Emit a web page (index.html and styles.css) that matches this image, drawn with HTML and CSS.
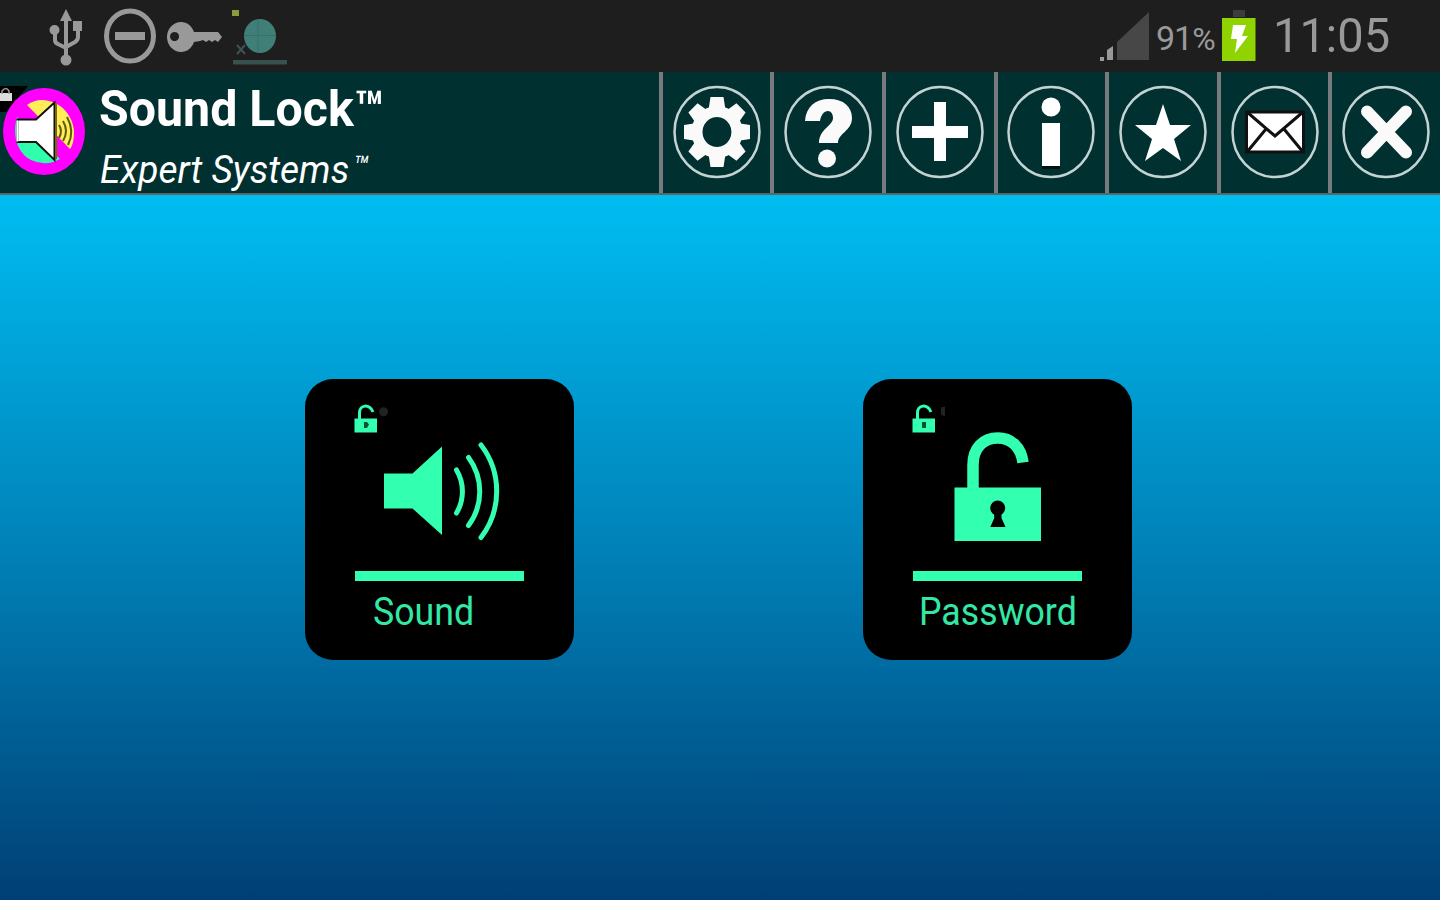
FILE: index.html
```html
<!DOCTYPE html>
<html lang="en">
<head>
  <meta charset="utf-8">
  <title>Sound Lock</title>
  <link rel="stylesheet" href="styles.css">
</head>
<body>
  <div class="status-bar">
    <svg class="status-icons" width="300" height="72" viewBox="0 0 300 72">
      <g fill="none" stroke="#999" stroke-width="4">
        <path d="M66 16V60M55 30v10q0 3 3 4l8 4M78 26v11q0 3-3 5l-9 5"/>
      </g>
      <g fill="#999">
        <path d="M66 9l6 12H60zM73 21h9v10h-9z"/>
        <circle cx="54.5" cy="30" r="5"/>
        <circle cx="66" cy="60" r="5.5"/>
      </g>
      <ellipse cx="130" cy="36" rx="23.5" ry="25" fill="none" stroke="#999" stroke-width="5"/>
      <path d="M115 32h30v8h-30z" fill="#999"/>
      <path d="M181 22c6 0 11 4 13 10h24l4 5-4 5-3-2-3 2-3-2-3 2-3-2-3 1-6 1c-2 6-7 10-13 10-8 0-14-7-14-15s6-15 14-15zM174.500 32a4.500 4.500 0 1 0 .1 0z" fill="#999" fill-rule="evenodd"/>
      <path d="M232 10h7v6h-7z" fill="#8f9a3a"/>
      <ellipse cx="260" cy="36" rx="16" ry="17" fill="#3f7f78"/>
      <path d="M244 35.500h32M258 20v33" stroke="#37706a" stroke-width="1" fill="none"/>
      <path d="M237 45l8 9M245 45l-8 9" stroke="#3d5552" stroke-width="2"/>
      <path d="M233 60h54v4.500h-54z" fill="#38504e"/>
    </svg>
    <div class="status-right">
      <svg width="50" height="72" viewBox="1099 0 50 72">
        <path d="M1149 12v48h-32V42z" fill="#474747"/>
        <path d="M1107 50l6-4v14h-6zM1100 57h4v4h-4z" fill="#999"/>
      </svg>
      <span class="battery-level">91<small>%</small></span>
      <svg class="battery" width="34" height="72" viewBox="1222 0 34 72">
        <path d="M1233 10h12v7h-12z" fill="#3c3c3c"/>
        <path d="M1222 18h33.500v43H1222z" fill="#8fd400"/>
        <path d="M1233 25h13l-4 11h6l-13 17 2-14h-6z" fill="#fff"/>
      </svg>
      <span class="clock">11:05</span>
    </div>
  </div>

  <header class="header">
    <svg class="logo" width="90" height="121" viewBox="0 72 90 121">
      <path d="M0 86h28L6 112H0z" fill="#000"/>
      <path d="M0 93h12v8H0z" fill="#ddd"/>
      <path d="M2 94v-3q4-5 7 0v3" fill="none" stroke="#999" stroke-width="1.500"/>
      <ellipse cx="44" cy="131.500" rx="41" ry="43.500" fill="#f0f"/>
      <path d="M27 105q10-7 22-4c14 3 24 16 25 30 0 8-1 14-4 18z" fill="#ffee58"/>
      <path d="M17 117l43 42q-14 8-29 1c-14-7-19-25-14-43z" fill="#2fffac"/>
      <path d="M17.500 119.500H36l18.500-17V160L36 142H17.500z" fill="#fff" stroke="#111" stroke-width="2"/>
      <path d="M17.500 120.500v21" stroke="#fff" stroke-width="2"/>
      <path d="M56 103v56" stroke="#776a00" stroke-width="2"/>
      <path d="M59 125q4 6 0 13M63 121q6 10 0 20M67 117q8 14 1 28" fill="none" stroke="#5f5912" stroke-width="2"/>
    </svg>
    <div class="titles">
      <h1><span>Sound Lock™</span></h1>
      <p><span>Expert Systems<small>™</small></span></p>
    </div>
    <nav class="tools">
      <a class="tool"><svg width="90" height="96" viewBox="-45 -48 90 96">
        <ellipse rx="42.500" ry="45"/>
        <g fill="#fafafa">
          <path d="M-6.500-35H6.500L8.500-22h-17zM-6.500 35H6.500L8.500 22h-17zM-33-7v14l13 2V-9zM33-7v14L20 9V-9z"/>
          <path transform="rotate(45)" d="M-6.500-34H6.500L8.500-22h-17zM-6.500 34H6.500L8.500 22h-17zM-34-6.500v13l12 2v-17zM34-6.500v13l-12 2v-17z"/>
          <path fill-rule="evenodd" d="M0-26a25.500 26 0 1 0 .1 0zM0-15a14.500 15 0 1 1-.1 0z"/>
        </g>
      </svg></a>
      <a class="tool"><svg width="90" height="96" viewBox="-45 -48 90 96">
        <ellipse rx="42.500" ry="45"/>
        <path d="M-23-11C-22-25-13-33 1-33 16-33 24-25 24-14 24-1 10 1 10 11H-9C-9-3 5-6 5-14c0-4-2-7-5-7-4 0-7 4-8 10z" fill="#fafafa"/>
        <circle cx="-1" cy="26.500" r="9" fill="#fafafa"/>
      </svg></a>
      <a class="tool"><svg width="90" height="96" viewBox="-45 -48 90 96">
        <ellipse rx="42.500" ry="45"/>
        <path d="M-6-30H6v24h22V6H6v23H-6V6h-22V-6h22z" fill="#fff"/>
      </svg></a>
      <a class="tool"><svg width="90" height="96" viewBox="-45 -48 90 96">
        <ellipse rx="42.500" ry="45"/>
        <path d="M-9 34H9v3H-9z" fill="#001312"/>
        <circle cy="-25" r="9.500" fill="#fff"/>
        <path d="M-9-9H9v43H-9z" fill="#fff"/>
      </svg></a>
      <a class="tool"><svg width="90" height="96" viewBox="-45 -48 90 96">
        <ellipse rx="42.500" ry="45"/>
        <path d="M0-28L7-7h21L11 7l7 22L0 16l-18 13 7-22-17-14h21z" fill="#fff"/>
      </svg></a>
      <a class="tool"><svg width="90" height="96" viewBox="-45 -48 90 96">
        <ellipse rx="42.500" ry="45"/>
        <path d="M-28.500-20h57v40h-57z" fill="#fff" stroke="#111" stroke-width="3"/>
        <path d="M-28-20L0 4l28-24M-28 20l19-23M28 20L9-3" fill="none" stroke="#111" stroke-width="3"/>
      </svg></a>
      <a class="tool"><svg width="90" height="96" viewBox="-45 -48 90 96">
        <ellipse rx="42.500" ry="45"/>
        <path d="M-19-20.500l39 41M20-20.500l-39 41" stroke="#fafafa" stroke-width="12" stroke-linecap="round"/>
      </svg></a>
    </nav>
  </header>

  <main class="main">
    <a class="card">
      <svg width="170" height="172" viewBox="0 0 170 172">
        <path d="M4.500 20v-6c0-9 10-9 13.500-1" fill="none" stroke="#33ffb1" stroke-width="3"/>
        <path d="M-.5 19.500H22v14H-.5z" fill="#33ffb1"/>
        <path d="M9 23h3l2 2.500-2 3.500H9z" fill="#053"/>
        <circle cx="28.500" cy="12.700" r="4.500" fill="#222"/>
        <path d="M29 74.500h28.500l29.500-27V136l-29.500-26.500H29z" fill="#33ffb1"/>
        <g fill="none" stroke="#33ffb1" stroke-width="5" stroke-linecap="round">
          <path d="M101.500 71a42 42 0 0 1 0 43"/>
          <path d="M113.500 58.500a57 57 0 0 1 0 68"/>
          <path d="M126 46a76 76 0 0 1 0 92.500"/>
        </g>
      </svg>
      <div class="line"></div>
      <span class="label label-sound">Sound</span>
    </a>
    <a class="card">
      <svg width="170" height="172" viewBox="0 0 170 172">
        <path d="M4.500 20v-6c0-9 10-9 13.500-1" fill="none" stroke="#33ffb1" stroke-width="3"/>
        <path d="M-.5 19.500H22v14H-.5z" fill="#33ffb1"/>
        <path d="M9 23h4v6H9z" fill="#053"/>
        <path d="M28 8.500l4-1v10l-4-2z" fill="#222"/>
        <path d="M60 89V66C60 49 70 39 85 39c13 0 23 9 25 24.500" fill="none" stroke="#33ffb1" stroke-width="11.500"/>
        <path d="M41.500 88.500h86.500V142H41.500z" fill="#33ffb1"/>
        <circle cx="84.700" cy="109" r="7.500" fill="#000"/>
        <path d="M81 114h7.500v5l4 9H77.300l4-9z" fill="#000"/>
      </svg>
      <div class="line"></div>
      <span class="label label-password">Password</span>
    </a>
  </main>
</body>
</html>
```

FILE: styles.css
```css
body {
  margin: 0;
  width: 1440px;
  height: 900px;
  overflow: hidden;
  display: flex;
  flex-direction: column;
  font-family: Roboto, sans-serif;
  background-color: #1e1e1e;
}

svg {
  display: block;
  flex: none;
}

.status-bar {
  display: flex;
  justify-content: space-between;
  height: 72px;
  color: #999;
}

.status-right {
  display: flex;
  width: 341px;
  line-height: 72px;
  white-space: nowrap;
}

.battery-level {
  width: 73px;
  padding-top: 2px;
  box-sizing: border-box;
  padding-left: 7px;
  font-size: 34px;
  letter-spacing: -1px;
}

.battery-level small {
  font-size: 32px;
}

.clock {
  margin-left: 17px;
  font-size: 49px;
  transform: scaleX(0.96);
  transform-origin: left;
}

.header {
  display: flex;
  height: 121px;
  background-color: #00302f;
  border-bottom: 2px solid #5c6660;
}

.titles {
  width: 569px;
  padding-left: 9px;
  box-sizing: border-box;
  color: #fff;
  white-space: nowrap;
}

.titles span {
  display: inline-block;
  transform: scaleX(0.966);
  transform-origin: left;
}

.titles h1 {
  margin: 0;
  height: 74px;
  line-height: 74px;
  font-size: 50px;
}

.titles p {
  margin: 0;
  line-height: 48px;
  font-size: 38px;
  font-style: italic;
}

.titles p span {
  padding-left: 1px;
  transform: scaleX(0.975);
}

.titles small {
  margin-left: 4px;
  font-size: 27px;
  vertical-align: 8px;
  line-height: 1;
}

.tools {
  display: grid;
  grid-template-columns: repeat(7, 111.6px);
}

.tool {
  display: flex;
  align-items: flex-start;
  justify-content: center;
  padding-top: 11.5px;
  border-left: 4px solid #777b7e;
}

.tool ellipse {
  fill: none;
  stroke: #c3d3d3;
  stroke-width: 2.5;
}

.main {
  flex: 1;
  display: flex;
  align-items: flex-start;
  gap: 289px;
  padding: 184px 0 0 305px;
  background: linear-gradient(#00bdf2, #0082b8 50%, #003f75);
}

.card {
  width: 269px;
  height: 281px;
  padding: 20px 50px 0;
  box-sizing: border-box;
  border-radius: 28px;
  background-color: #000;
  color: #33e8a5;
}

.card svg {
  overflow: visible;
}

.line {
  height: 10px;
  background-color: #33ffb1;
}

.label {
  display: block;
  font-size: 38px;
  line-height: 62px;
  white-space: nowrap;
  transform: scaleX(0.94);
  transform-origin: left;
}

.label-sound {
  margin-left: 18px;
}

.label-password {
  margin-left: 6px;
}
```
